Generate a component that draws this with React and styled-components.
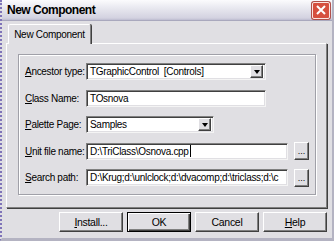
import React from "react";
import styled, { createGlobalStyle, css } from "styled-components";

const GlobalStyle = createGlobalStyle`
  html, body {
    margin: 0;
    padding: 0;
    background: #e0dfe3;
  }
  * {
    box-sizing: border-box;
  }
`;

const face = "#e0dfe3";

const Window = styled.div`
  width: 334px;
  height: 241px;
  display: flex;
  flex-direction: column;
  background: ${face};
  border-left: 2px dotted #7f74b8;
  border-right: 2px solid #b4b3c2;
  border-bottom: 3px solid #b4b3c2;
  font-family: "Liberation Sans", Arial, sans-serif;
  font-size: 10px;
  letter-spacing: -0.3px;
  color: #000;
  overflow: hidden;
`;

const TitleBar = styled.div`
  height: 21px;
  flex: none;
  display: flex;
  align-items: center;
  justify-content: space-between;
  padding: 0 1px 0 5px;
  background: linear-gradient(#fbfbfd, #e6e6ee 45%, #d3d2e0 90%, #bdbcd0);
  border-bottom: 1px solid #a9a8bd;
`;

const Title = styled.span`
  font-weight: bold;
  font-size: 12px;
  letter-spacing: -0.5px;
`;

const CloseBox = styled.div`
  width: 20px;
  height: 19px;
  padding: 1px;
  border-radius: 3px;
  background: #b0504a;
  display: flex;
`;

const CloseFace = styled.div`
  flex: 1;
  border-radius: 2px;
  border: 1px solid #fbe6e2;
  background: #d6503f;
  display: flex;
  align-items: center;
  justify-content: center;
`;

const Body = styled.div`
  flex: 1;
  display: flex;
  flex-direction: column;
  padding: 3px 5px 0 4px;
`;

const TabStrip = styled.div`
  display: flex;
  height: 19px;
  padding-left: 2px;
  position: relative;
  z-index: 1;
`;

const Tab = styled.div`
  width: 83px;
  height: 20px;
  display: flex;
  align-items: center;
  justify-content: center;
  background: ${face};
  border-top: 1px solid #fff;
  border-left: 1px solid #fff;
  border-right: 1px solid #808080;
  border-radius: 2px 2px 0 0;
  box-shadow: 1px 0 0 #404040;
`;

const TabPanel = styled.div`
  height: 165px;
  border-top: 1px solid #fff;
  border-left: 1px solid #fff;
  border-right: 1px solid #808080;
  border-bottom: 1px solid #808080;
  box-shadow: 1px 1px 0 #404040;
  padding: 10px 10px 12px 11px;
  display: flex;
`;

const GroupBox = styled.div`
  flex: 1;
  border: 1px solid #a0a0a8;
  box-shadow: inset 1px 1px 0 #fff, 1px 1px 0 #fff;
  padding: 8px 0 0 6px;
  display: grid;
  grid-template-columns: 61px auto 1fr;
  grid-auto-rows: 17px;
  row-gap: 9.5px;
  align-items: center;
`;

const Label = styled.span`
  white-space: nowrap;
  u {
    text-decoration: underline;
  }
`;

const sunken = css`
  height: 17px;
  background: #fff;
  border-top: 1px solid #808080;
  border-left: 1px solid #808080;
  border-right: 1px solid #f4f4f4;
  border-bottom: 1px solid #f4f4f4;
  box-shadow: inset 1px 1px 0 #404040, inset -1px -1px 0 ${face};
`;

const Field = styled.div`
  ${sunken};
  width: ${(p) => p.$w}px;
  display: flex;
  align-items: center;
  padding-left: 3px;
  white-space: pre;
  overflow: hidden;
`;

const Caret = styled.span`
  display: inline-block;
  width: 1px;
  height: 12px;
  background: #000;
  margin-left: 1px;
`;

const Combo = styled(Field)`
  padding-right: 2px;
  justify-content: space-between;
`;

const raised = css`
  background: ${face};
  border-top: 1px solid #fff;
  border-left: 1px solid #fff;
  border-right: 1px solid #404040;
  border-bottom: 1px solid #404040;
  box-shadow: inset -1px -1px 0 #808080;
`;

const DropButton = styled.div`
  ${raised};
  width: 13px;
  height: 13px;
  display: flex;
  align-items: center;
  justify-content: center;
`;

const Arrow = styled.span`
  width: 0;
  height: 0;
  border-left: 3.5px solid transparent;
  border-right: 3.5px solid transparent;
  border-top: 4px solid #000;
  margin-top: 1px;
`;

const FieldCell = styled.div`
  display: flex;
  align-items: center;
  gap: 6px;
`;

const Browse = styled.div`
  ${raised};
  width: 15px;
  height: 18px;
  display: flex;
  align-items: flex-end;
  justify-content: center;
  padding-bottom: 3px;
  font-size: 9px;
  letter-spacing: 0;
`;

const ButtonRow = styled.div`
  display: flex;
  justify-content: flex-end;
  gap: 4px;
  padding: 4px 0 0;
`;

const Button = styled.div`
  width: 64px;
  height: 20px;
  display: flex;
  align-items: center;
  justify-content: center;
  font-size: 10.5px;
  ${raised};
  ${(p) =>
    p.$default &&
    css`
      border: 1px solid #000;
      box-shadow: inset 1px 1px 0 #fff, inset -1px -1px 0 #404040,
        inset -2px -2px 0 #808080;
    `}
`;

const rows = [
  { label: "Ancestor type:", value: "TGraphicControl  [Controls]", kind: "combo", w: 180 },
  { label: "Class Name:", value: "TOsnova", kind: "field", w: 180 },
  { label: "Palette Page:", value: "Samples", kind: "combo", w: 128 },
  { label: "Unit file name:", value: "D:\\TriClass\\Osnova.cpp", kind: "file", w: 202, caret: true },
  { label: "Search path:", value: "D:\\Krug;d:\\unlclock;d:\\dvacomp;d:\\triclass;d:\\c", kind: "file", w: 202 },
];

const Accel = ({ text }) => (
  <Label>
    <u>{text[0]}</u>
    {text.slice(1)}
  </Label>
);

export default function App() {
  return (
    <>
      <GlobalStyle />
      <Window>
        <TitleBar>
          <Title>New Component</Title>
          <CloseBox>
            <CloseFace>
              <svg width="10" height="10" viewBox="0 0 10 10">
                <path d="M1 1 L9 9 M9 1 L1 9" stroke="#ffffff" strokeWidth="2" />
              </svg>
            </CloseFace>
          </CloseBox>
        </TitleBar>
        <Body>
          <TabStrip>
            <Tab>New Component</Tab>
          </TabStrip>
          <TabPanel>
            <GroupBox>
              {rows.map((r) => (
                <React.Fragment key={r.label}>
                  <Accel text={r.label} />
                  <FieldCell>
                    {r.kind === "combo" ? (
                      <Combo $w={r.w}>
                        <span>{r.value}</span>
                        <DropButton>
                          <Arrow />
                        </DropButton>
                      </Combo>
                    ) : (
                      <Field $w={r.w}>
                        {r.value}
                        {r.caret && <Caret />}
                      </Field>
                    )}
                    {r.kind === "file" && <Browse>...</Browse>}
                  </FieldCell>
                  <span />
                </React.Fragment>
              ))}
            </GroupBox>
          </TabPanel>
          <ButtonRow>
            <Button>
              <Accel text="Install..." />
            </Button>
            <Button $default>OK</Button>
            <Button>Cancel</Button>
            <Button>
              <Accel text="Help" />
            </Button>
          </ButtonRow>
        </Body>
      </Window>
    </>
  );
}
